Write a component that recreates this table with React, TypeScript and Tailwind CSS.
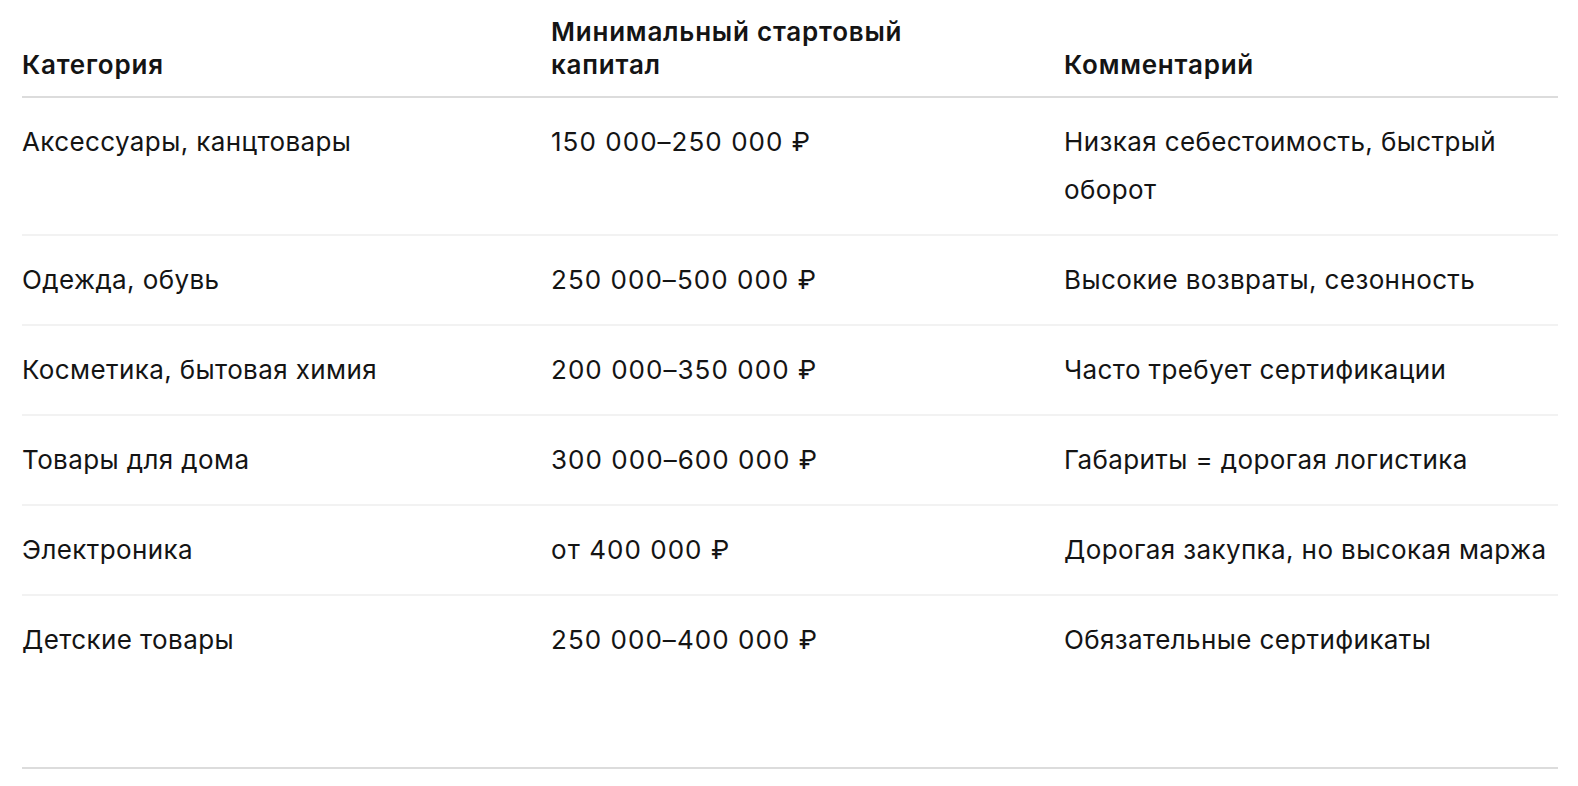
const rows = [
  { category: "Аксессуары, канцтовары", capital: "150 000–250 000 ₽", comment: "Низкая себестоимость, быстрый оборот" },
  { category: "Одежда, обувь", capital: "250 000–500 000 ₽", comment: "Высокие возвраты, сезонность" },
  { category: "Косметика, бытовая химия", capital: "200 000–350 000 ₽", comment: "Часто требует сертификации" },
  { category: "Товары для дома", capital: "300 000–600 000 ₽", comment: "Габариты = дорогая логистика" },
  { category: "Электроника", capital: "от 400 000 ₽", comment: "Дорогая закупка, но высокая маржа" },
  { category: "Детские товары", capital: "250 000–400 000 ₽", comment: "Обязательные сертификаты" },
];

export default function App() {
  return (
    <div className="min-h-screen bg-white px-[22px] font-['Inter',sans-serif] text-[#141414] antialiased">
      <div className="w-[1536px]">
        {/* шапка таблицы */}
        <div className="grid grid-cols-[529px_513px_1fr] items-end border-b-2 border-[#dcdcdc] pt-4 pb-[15px] text-[26px] font-semibold leading-[32.5px] tracking-[0.03em]">
          <div className="pr-16">Категория</div>
          <div className="max-w-[420px]">Минимальный стартовый капитал</div>
          <div>Комментарий</div>
        </div>

        {rows.map((row, i) => (
          <div
            key={row.category}
            className={
              i === rows.length - 1
                ? "grid grid-cols-[529px_513px_1fr] pt-5 pb-[103px] text-[26px] leading-[48px] tracking-[0.015em]"
                : "grid grid-cols-[529px_513px_1fr] border-b-2 border-[#f2f2f2] py-5 text-[26px] leading-[48px] tracking-[0.015em]"
            }
          >
            <div className="pr-16">{row.category}</div>
            <div className="pr-16 tracking-[0.04em]">{row.capital}</div>
            <div>{row.comment}</div>
          </div>
        ))}

        <div className="border-b-2 border-[#dcdcdc]" />
      </div>
    </div>
  );
}
